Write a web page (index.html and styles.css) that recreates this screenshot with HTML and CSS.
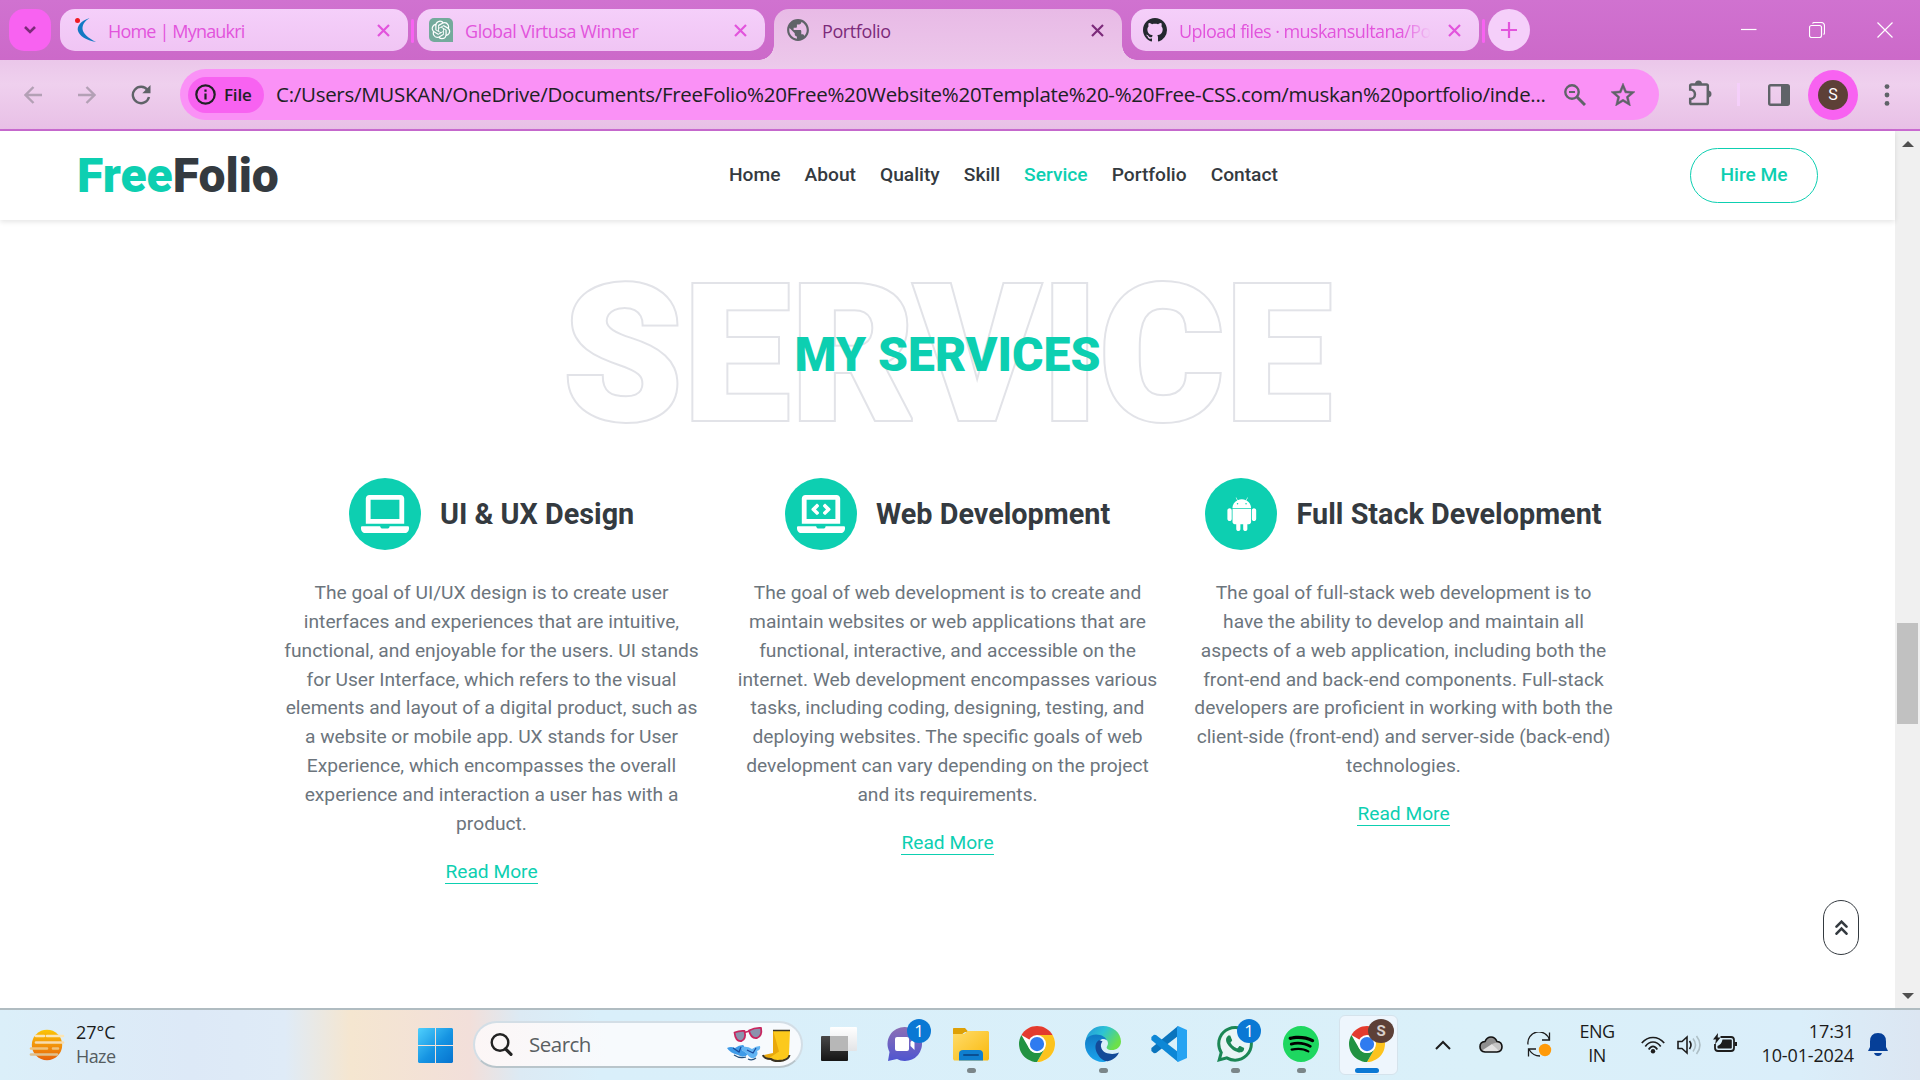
FILE: index.html
```html
<!DOCTYPE html>
<html lang="en">
<head>
<meta charset="utf-8">
<title>Portfolio</title>
<link rel="stylesheet" href="styles.css">
</head>
<body>
<div class="screen">
  <div class="tabstrip">
    <div class="tab-search"><svg width="14" height="10" viewBox="0 0 14 10"><path d="M2 2l5 5 5-5" fill="none" stroke="#7c2a7a" stroke-width="2.6"/></svg></div>
    <div class="tab first">
      <svg class="fav" width="24" height="24" viewBox="0 0 24 24"><path d="M14.500 0C6 3 1.500 8 3 13c1.500 5 8 9 18 11C13 20 7.500 15 7.500 10.500 7.500 6 10 3 14.500 0z" fill="#1379c4"/><circle cx="2.500" cy="2.500" r="2.500" fill="#f01822"/></svg>
      <span class="t t-tab1">Home | Mynaukri</span>
      <svg class="x" width="13" height="13" viewBox="0 0 13 13"><path d="M1 1l11 11M12 1L1 12"/></svg>
    </div>
    <div class="sep"></div>
    <div class="tab">
      <svg class="fav" width="24" height="24" viewBox="0 0 24 24"><path d="M5 0h14a5 5 0 0 1 5 5v19H5a5 5 0 0 1-5-5V5a5 5 0 0 1 5-5z" fill="#74aa9c"/><path transform="translate(2.600 2.600) scale(.78)" fill="#fff" d="M22.2819 9.8211a5.9847 5.9847 0 0 0-.5157-4.9108 6.0462 6.0462 0 0 0-6.5098-2.9A6.0651 6.0651 0 0 0 4.9807 4.1818a5.9847 5.9847 0 0 0-3.9977 2.9 6.0462 6.0462 0 0 0 .7427 7.0966 5.98 5.98 0 0 0 .511 4.9107 6.051 6.051 0 0 0 6.5146 2.9001A5.9847 5.9847 0 0 0 13.2599 24a6.0557 6.0557 0 0 0 5.7718-4.2058 5.9894 5.9894 0 0 0 3.9977-2.9001 6.0557 6.0557 0 0 0-.7475-7.0729zm-9.022 12.6081a4.4755 4.4755 0 0 1-2.8764-1.0408l.1419-.0804 4.7783-2.7582a.7948.7948 0 0 0 .3927-.6813v-6.7369l2.02 1.1686a.071.071 0 0 1 .038.052v5.5826a4.504 4.504 0 0 1-4.4945 4.4944zm-9.6607-4.1254a4.4708 4.4708 0 0 1-.5346-3.0137l.142.0852 4.783 2.7582a.7712.7712 0 0 0 .7806 0l5.8428-3.3685v2.3324a.0804.0804 0 0 1-.0332.0615L9.74 19.9502a4.4992 4.4992 0 0 1-6.1408-1.6464zM2.3408 7.8956a4.485 4.485 0 0 1 2.3655-1.9728V11.6a.7664.7664 0 0 0 .3879.6765l5.8144 3.3543-2.0201 1.1685a.0757.0757 0 0 1-.071 0l-4.8303-2.7865A4.504 4.504 0 0 1 2.3408 7.872zm16.5963 3.8558L13.1038 8.364 15.1192 7.2a.0757.0757 0 0 1 .071 0l4.8303 2.7913a4.4944 4.4944 0 0 1-.6765 8.1042v-5.6772a.79.79 0 0 0-.407-.667zm2.0107-3.0231l-.142-.0852-4.7735-2.7818a.7759.7759 0 0 0-.7854 0L9.409 9.2297V6.8974a.0662.0662 0 0 1 .0284-.0615l4.8303-2.7866a4.4992 4.4992 0 0 1 6.6802 4.66zM8.3065 12.863l-2.02-1.1638a.0804.0804 0 0 1-.038-.0567V6.0742a4.4992 4.4992 0 0 1 7.3757-3.4537l-.142.0805L8.704 5.459a.7948.7948 0 0 0-.3927.6813zm1.0976-2.3654l2.602-1.4998 2.6069 1.4998v2.9994l-2.5974 1.4997-2.6067-1.4997Z"/></svg>
      <span class="t t-tab2">Global Virtusa Winner</span>
      <svg class="x" width="13" height="13" viewBox="0 0 13 13"><path d="M1 1l11 11M12 1L1 12"/></svg>
    </div>
    <div class="tab active">
      <svg class="fav" width="24" height="24" viewBox="1 1 22 22"><path fill="#5f6368" d="M12 2C6.480 2 2 6.480 2 12s4.480 10 10 10 10-4.480 10-10S17.520 2 12 2zm-1 17.930c-3.950-.49-7-3.850-7-7.930 0-.62.08-1.210.21-1.790L9 15v1c0 1.100.9 2 2 2v1.930zm6.900-2.540c-.26-.81-1-1.390-1.900-1.390h-1v-3c0-.55-.45-1-1-1H8v-2h2c.55 0 1-.45 1-1V7h2c1.100 0 2-.9 2-2v-.41c2.930 1.190 5 4.060 5 7.410 0 2.080-.8 3.970-2.100 5.390z"/></svg>
      <span class="t t-tab3">Portfolio</span>
      <svg class="x" width="13" height="13" viewBox="0 0 13 13"><path d="M1 1l11 11M12 1L1 12"/></svg>
    </div>
    <div class="tab last">
      <svg class="fav" width="24" height="24" viewBox="0 0 16 16"><path fill="#24292f" d="M8 0C3.580 0 0 3.580 0 8c0 3.540 2.290 6.530 5.470 7.590.4.070.55-.17.55-.38 0-.19-.01-.82-.01-1.490-2.010.37-2.530-.49-2.690-.94-.09-.23-.48-.94-.82-1.130-.28-.15-.68-.52-.01-.53.63-.01 1.080.58 1.230.82.72 1.210 1.870.87 2.330.66.070-.52.28-.87.51-1.070-1.780-.2-3.640-.89-3.640-3.950 0-.87.31-1.590.82-2.150-.08-.2-.36-1.020.08-2.120 0 0 .67-.21 2.200.82.64-.18 1.320-.27 2-.27s1.360.09 2 .27c1.530-1.040 2.200-.82 2.200-.82.44 1.100.16 1.920.08 2.120.51.56.82 1.270.82 2.150 0 3.070-1.870 3.750-3.650 3.950.29.25.54.73.54 1.480 0 1.070-.01 1.930-.01 2.200 0 .21.15.46.55.38A8.010 8.010 0 0 0 16 8c0-4.420-3.580-8-8-8z"/></svg>
      <span class="t t-tab4 fade">Upload files · muskansultana/Po</span>
      <svg class="x" width="13" height="13" viewBox="0 0 13 13"><path d="M1 1l11 11M12 1L1 12"/></svg>
    </div>
    <div class="sep"></div>
    <div class="newtab"><svg width="16" height="16" viewBox="0 0 16 16"><path d="M8 0v16M0 8h16" stroke="#e254dc" stroke-width="2.200"/></svg></div>
    <div class="winctl">
      <svg width="16" height="16" viewBox="0 0 16 16"><path d="M0 7.500h15.500"/></svg>
      <svg width="16" height="16" viewBox="0 0 16 16"><rect x=".5" y="3.500" width="12" height="12" rx="2"/><path d="M3.500 1.500Q4 .5 5.500.500H12q3.500 0 3.500 3.500v6.500q0 1.500-1 2"/></svg>
      <svg width="16" height="16" viewBox="0 0 16 16"><path d="M.5.500l15 15M15.500.500l-15 15"/></svg>
    </div>
  </div>

  <div class="toolbar">
    <svg class="nav-ico" width="18" height="18" viewBox="0 0 18 18"><path d="M18 9H2M9.500 1L1.500 9l8 8" fill="none" stroke="#b3a0b5" stroke-width="2.400"/></svg>
    <svg class="nav-ico" width="18" height="18" viewBox="0 0 18 18"><path d="M0 9h16M8.500 1l8 8-8 8" fill="none" stroke="#b3a0b5" stroke-width="2.400"/></svg>
    <svg class="nav-ico reload" width="20" height="20" viewBox="0 0 20 20"><path d="M16.600 5A8.200 8.200 0 1 0 18 12" fill="none" stroke="#5f6368" stroke-width="2.400"/><path d="M19.500 0v8.200h-8.200z" fill="#5f6368"/></svg>
    <div class="omnibox">
      <div class="chip">
        <svg width="21" height="21" viewBox="0 0 21 21"><circle cx="10.500" cy="10.500" r="9.200" fill="none" stroke="#202124" stroke-width="2.200"/><path d="M10.500 9.500v6M10.500 5.500v2.200" stroke="#202124" stroke-width="2.200"/></svg>
        <span class="t t-file">File</span>
      </div>
      <span class="t t-url">C:/Users/MUSKAN/OneDrive/Documents/FreeFolio%20Free%20Website%20Template%20-%20Free-CSS.com/muskan%20portfolio/inde...</span>
      <svg class="mag" width="22" height="22" viewBox="0 0 22 22"><g fill="none" stroke="#5f6368"><circle cx="8" cy="8" r="6.700" stroke-width="2.400"/><path d="M12.800 12.800L21 21" stroke-width="3"/><path d="M5 8h6" stroke-width="2"/></g></svg>
      <svg class="star" width="24" height="23" viewBox="2 2 20 19"><path fill="#5f6368" stroke="#5f6368" stroke-width=".4" d="M22 9.240l-7.190-.62L12 2 9.190 8.630 2 9.240l5.460 4.730L5.820 21 12 17.270 18.180 21l-1.630-7.030L22 9.240zM12 15.400l-3.760 2.270 1-4.280-3.320-2.880 4.380-.38L12 6.100l1.710 4.040 4.380.38-3.320 2.880 1 4.280L12 15.400z"/></svg>
    </div>
    <svg class="ext" width="25" height="26" viewBox="0 0 25 26"><path d="M4.500 4.500h15q1.300 0 1.300 1.300v17q0 1.300-1.300 1.300h-15q-1.300 0-1.300-1.300V19a4.600 4.600 0 0 0 0-9.500V5.800q0-1.300 1.300-1.300z" fill="none" stroke="#5f6368" stroke-width="2.500"/><path d="M8 4a3.500 3.500 0 0 1 7 0zM21 10.500a3.500 3.500 0 0 1 0 7z" fill="#5f6368"/></svg>
    <div class="tsep"></div>
    <svg class="panel" width="22" height="22" viewBox="0 0 22 22"><rect x="1.200" y="1.200" width="19.600" height="19.600" rx="1.500" fill="none" stroke="#5f6368" stroke-width="2.400"/><path d="M13 1h8v20h-8z" fill="#5f6368"/></svg>
    <div class="avatar"><div class="face">S</div></div>
    <svg class="dots" width="6" height="22" viewBox="0 0 6 22" fill="#5f6368"><circle cx="3" cy="2.600" r="2.400"/><circle cx="3" cy="11" r="2.400"/><circle cx="3" cy="19.400" r="2.400"/></svg>
  </div>

  <div class="viewport">
    <div class="page">
      <header class="header">
        <div class="logo t"><span>Free</span>Folio</div>
        <nav class="menu">
          <a class="t">Home</a><a class="t">About</a><a class="t">Quality</a><a class="t">Skill</a><a class="t on">Service</a><a class="t">Portfolio</a><a class="t">Contact</a>
        </nav>
        <a class="hire"><span class="t">Hire Me</span></a>
      </header>
      <section class="service">
        <div class="title">
          <div class="ghost"><span class="t">SERVICE</span></div>
          <h1><span class="t">MY SERVICES</span></h1>
        </div>
        <div class="cols">
          <article>
            <div class="head"><div class="circle"><svg width="48" height="38.400" viewBox="0 0 640 512"><path d="M624 416H381.540c-.74 19.810-14.710 32-32.740 32H288c-18.690 0-33.020-17.470-32.770-32H16c-8.800 0-16 7.200-16 16v16c0 35.200 28.800 64 64 64h512c35.200 0 64-28.800 64-64v-16c0-8.800-7.200-16-16-16zM576 48c0-26.400-21.600-48-48-48H112C85.600 0 64 21.600 64 48v336h512V48zm-64 272H128V64h384v256z"/></svg></div><h2 class="t">UI &amp; UX Design</h2></div>
            <p>The goal of UI/UX design is to create user<br>interfaces and experiences that are intuitive,<br>functional, and enjoyable for the users. UI stands<br>for User Interface, which refers to the visual<br>elements and layout of a digital product, such as<br>a website or mobile app. UX stands for User<br>Experience, which encompasses the overall<br>experience and interaction a user has with a<br>product.</p>
            <a class="more t">Read More</a>
          </article>
          <article>
            <div class="head"><div class="circle"><svg width="48" height="38.400" viewBox="0 0 640 512"><path d="M255.030 261.650c6.250 6.250 16.380 6.250 22.630 0l11.310-11.310c6.250-6.250 6.250-16.380 0-22.630L253.250 192l35.710-35.720c6.250-6.250 6.250-16.380 0-22.630l-11.310-11.310c-6.250-6.250-16.380-6.250-22.630 0l-58.340 58.340c-6.250 6.250-6.250 16.380 0 22.630l58.350 58.340zm96.010-11.300l11.310 11.310c6.250 6.250 16.380 6.250 22.630 0l58.340-58.340c6.250-6.250 6.250-16.380 0-22.630l-58.340-58.340c-6.250-6.250-16.380-6.250-22.630 0l-11.310 11.310c-6.250 6.250-6.250 16.380 0 22.630L386.750 192l-35.710 35.720c-6.250 6.250-6.250 16.380 0 22.630zM624 416H381.540c-.74 19.810-14.710 32-32.740 32H288c-18.690 0-33.020-17.470-32.770-32H16c-8.800 0-16 7.200-16 16v16c0 35.200 28.800 64 64 64h512c35.200 0 64-28.800 64-64v-16c0-8.800-7.200-16-16-16zM576 48c0-26.400-21.600-48-48-48H112C85.600 0 64 21.600 64 48v336h512V48zm-64 272H128V64h384v256z"/></svg></div><h2 class="t">Web Development</h2></div>
            <p>The goal of web development is to create and<br>maintain websites or web applications that are<br>functional, interactive, and accessible on the<br>internet. Web development encompasses various<br>tasks, including coding, designing, testing, and<br>deploying websites. The specific goals of web<br>development can vary depending on the project<br>and its requirements.</p>
            <a class="more t">Read More</a>
          </article>
          <article>
            <div class="head"><div class="circle"><svg width="33.600" height="38.400" viewBox="0 0 448 512"><path d="M89.600 204.500v115.800c0 15.400-12.100 27.700-27.500 27.700-15.300 0-30.100-12.400-30.100-27.700V204.500c0-15.100 14.800-27.500 30.100-27.500 15.100 0 27.500 12.400 27.500 27.500zm10.800 157c0 16.400 13.200 29.600 29.600 29.600h19.900l.3 61.100c0 36.900 55.200 36.600 55.200 0v-61.100h37.200v61.100c0 36.700 55.500 36.800 55.500 0v-61.100h20.200c16.200 0 29.400-13.200 29.400-29.600V182.100H100.400v179.400zm248-189.100H99.300c0-42.800 25.600-80 63.600-99.400l-19.100-35.300c-2.800-4.900 4.300-8 6.700-3.800l19.400 35.600c34.900-15.500 75-14.700 108.300 0L297.500 34c2.500-4.300 9.500-1.100 6.700 3.800L285.100 73c37.700 19.400 63.300 56.600 63.300 99.400zm-170.700-55.500c0-5.700-4.600-10.500-10.500-10.500-5.700 0-10.200 4.800-10.200 10.500s4.600 10.500 10.200 10.500c5.900 0 10.500-4.800 10.500-10.500zm113.400 0c0-5.700-4.600-10.500-10.200-10.500-5.900 0-10.500 4.800-10.500 10.500s4.600 10.500 10.500 10.500c5.600 0 10.200-4.800 10.200-10.500zm94.800 60.100c-15.100 0-27.500 12.100-27.500 27.500v115.800c0 15.400 12.400 27.700 27.500 27.700 15.400 0 30.100-12.400 30.100-27.700V204.500c0-15.400-14.800-27.500-30.100-27.500z"/></svg></div><h2 class="t">Full Stack Development</h2></div>
            <p>The goal of full-stack web development is to<br>have the ability to develop and maintain all<br>aspects of a web application, including both the<br>front-end and back-end components. Full-stack<br>developers are proficient in working with both the<br>client-side (front-end) and server-side (back-end)<br>technologies.</p>
            <a class="more t">Read More</a>
          </article>
        </div>
      </section>
      <a class="totop"><svg width="13" height="15" viewBox="0 0 13 15"><path d="M1.500 6.700l5-5 5 5M1.500 13.700l5-5 5 5" fill="none" stroke="#343a40" stroke-width="2.600" stroke-linecap="round"/></svg></a>
    </div>
    <div class="scrollbar">
      <svg width="12" height="6" viewBox="0 0 12 6"><path d="M0 6l6-6 6 6z" fill="#505050"/></svg>
      <div class="thumb"></div>
      <svg width="12" height="6" viewBox="0 0 12 6"><path d="M0 0l6 6 6-6z" fill="#505050"/></svg>
    </div>
  </div>

  <div class="taskbar">
    <div class="weather">
      <svg width="36" height="32" viewBox="0 0 36 32"><defs><linearGradient id="sun" x1="0" y1="0" x2="0" y2="1"><stop offset="0" stop-color="#fbc507"/><stop offset="1" stop-color="#e8620c"/></linearGradient></defs><circle cx="18" cy="16" r="15.200" fill="url(#sun)"/><g stroke-linecap="round" stroke-width="2.600"><path d="M7 7h8M18 7h16" stroke="#fbe6b8"/><path d="M7 13.500h27" stroke="#f7dcae"/><path d="M2 19.500h16M24 19.500h5" stroke="#f0c27a"/><path d="M2 25.500h26" stroke="#dfc08e"/></g></svg>
      <div class="two"><span class="t">27°C</span><span class="t dim">Haze</span></div>
    </div>
    <svg class="win" width="35" height="35" viewBox="0 0 35 35"><defs><linearGradient id="w" x1="0" y1="0" x2="1" y2="1"><stop offset="0" stop-color="#4fd0fd"/><stop offset=".55" stop-color="#1593e2"/><stop offset="1" stop-color="#0673cf"/></linearGradient></defs><path fill="url(#w)" d="M1 0h16v17H0V1zM18 0h16l1 1v16H18zM0 18h17v17H1l-1-1zM18 18h17v16l-1 1H18z"/></svg>
    <div class="search">
      <svg width="23" height="23" viewBox="0 0 23 23"><g fill="none" stroke="#222"><circle cx="10" cy="9.500" r="8.300" stroke-width="2.400"/><path d="M15.500 15.800l5.500 5.500" stroke-width="3.200" stroke-linecap="round"/></g></svg>
      <span class="t">Search</span>
      <svg class="art" width="66" height="36" viewBox="0 0 66 36">
        <g fill="#8a93ad" stroke="#c8265f" stroke-width="1.800" stroke-linejoin="round"><path d="M8.500 6.500q5-2 10-1.500 2 8-3 10-6 1-7-8.500zM23 4.500q6-3 12-2.500 1.500 8-4 10-6 1-8-7.500z"/><path d="M18.500 6.500l5-1.500" /></g>
        <path d="M1 22q4-2 8 0 4-3 8-3 3 2-1 5 4 3 6 4-4 5-10 1Q4 27 1 22z" fill="#3f9be8"/><path d="M14 22q6-3 12 1 4-3 8-3 1 4-3 5 2 4-3 7-4 1-7-4-4-3-7-6z" fill="#62b4f3"/><path d="M7 22l6 4 2-5M21 24l6 3 3-5" stroke="#1a4b9c" stroke-width="1.200" fill="none"/><path d="M8 29q6 4 12 2M22 33q4 2 8-1" stroke="#24507c" stroke-width="1.200" fill="none"/>
        <path d="M38 29l9-2V5q4-2 9 0v22l-8 7q-9 0-10-5z" fill="#e9a80c"/><path d="M47 4h17l-1 24q0 5-7 6.500-11 1.500-12-3l9-6z" fill="#fcc91c"/><path d="M37 29q1 4 8 4 3 3 12 1.500 6-1.500 6.500-5.500" stroke="#3b3424" stroke-width="2" fill="none"/><path d="M47 4.500h17" stroke="#3b3424" stroke-width="1.500"/>
      </svg>
    </div>
    <div class="apps">
      <div class="app"><svg width="36" height="36" viewBox="0 0 36 36"><defs><linearGradient id="tv" x1="0" y1="0" x2="0" y2="1"><stop offset="0" stop-color="#484848"/><stop offset="1" stop-color="#151515"/></linearGradient><linearGradient id="tw" x1="0" y1="0" x2="0" y2="1"><stop offset="0" stop-color="#fff"/><stop offset="1" stop-color="#e3e4e6"/></linearGradient></defs><rect x="0" y="10" width="27" height="25" rx="1" fill="url(#tv)"/><rect x="9" y="1" width="27" height="24" rx="1" fill="url(#tw)"/><path d="M9 10h18v15H9z" fill="#b7b7b7"/></svg></div>
      <div class="app"><svg width="36" height="36" viewBox="0 0 36 36"><defs><linearGradient id="ch" x1="0" y1="0" x2="0" y2="1"><stop offset="0" stop-color="#8c6fb4"/><stop offset="1" stop-color="#4f55d0"/></linearGradient></defs><path d="M18 1a17 17 0 1 1-8 32L1 35l1.500-9A17 17 0 0 1 18 1z" fill="url(#ch)"/><rect x="8" y="11" width="14" height="14" rx="2" fill="#fff"/><path d="M23.500 16l4-4v12l-4-4z" fill="#fff"/></svg><span class="badge">1</span></div>
      <div class="app run"><svg width="36" height="36" viewBox="0 0 36 36"><defs><linearGradient id="fo" x1="0" y1="0" x2="1" y2="1"><stop offset="0" stop-color="#ffdc6b"/><stop offset="1" stop-color="#f9b90c"/></linearGradient></defs><path d="M0 2.500Q0 2 1 2h11l3.500 4H12L8 9H0z" fill="#dea006"/><path d="M0 8h11l3.500-3H35l1 1v27l-1 1.500H1L0 33z" fill="url(#fo)"/><path d="M6 34.500V28q0-4 4-4h16q4 0 4 4v6.500z" fill="#0f7fcf"/><path d="M11 29h14" stroke="#0a4f92" stroke-width="2" stroke-linecap="round"/></svg></div>
      <div class="app"><svg width="36" height="36" viewBox="0 0 48 48"><circle cx="24" cy="24" r="24" fill="#fff"/><path d="M24 24L3.220 12A24 24 0 0 1 44.780 12z" fill="#e33b2e"/><path d="M24 12h20.780A24 24 0 0 1 24 48l10.400-18z" fill="#fcc31e"/><path d="M3.220 12l10.390 18A12 12 0 0 0 34.400 30L24 48A24 24 0 0 1 3.220 12z" fill="#229342"/><circle cx="24" cy="24" r="12" fill="#fff"/><circle cx="24" cy="24" r="9.500" fill="#2f7bf0"/></svg></div>
      <div class="app run"><svg width="36" height="36" viewBox="0 0 36 36"><defs><linearGradient id="e1" x1="0" y1="0" x2="1" y2=".5"><stop offset="0" stop-color="#2390dd"/><stop offset=".5" stop-color="#2cc3d5"/><stop offset="1" stop-color="#6ce04a"/></linearGradient><linearGradient id="e2" x1="0" y1="0" x2="0" y2="1"><stop offset="0" stop-color="#1079c4"/><stop offset="1" stop-color="#1ba4ec"/></linearGradient></defs><path d="M.5 15C2 6 9 0 18 0c10 0 18 7 18 15.500 0 6-5 8.500-9 8.500-5 0-6-2-5-3.500 3-4.500-1-9-6-9-8 0-14 3.500-15.500 3.500z" fill="url(#e1)"/><path d="M0 18C0 12 5 8.500 11 8.500c6 0 10 3 11 6-4-3-9-1-9 5 0 7 6 12 13 11-2.500 3.500-5 5.500-8 5.500C8 36 0 28 0 18z" fill="url(#e2)"/><path d="M13.500 14.500C10 17 9.500 22 12 27c3 6 8 9 11.500 8 5-1 9-5 10.500-8.500-5 2.500-15 2-17.500-4-1.200-3-.5-5.500 1-7-1.500-.5-2.500-1.500-4-1z" fill="#134a98"/></svg></div>
      <div class="app"><svg width="36" height="36" viewBox="0 0 36 36"><path d="M27 0v10L5 27l-2 .3-2.600-2.400V22z" fill="#0a74bd"/><path d="M.4 11L3 8.700 5 9l22 17v10L.4 14z" fill="#0d87d6"/><path d="M27 0l9 4v28l-9 4-1-2V2z" fill="#26a3f2"/></svg></div>
      <div class="app run"><svg width="36" height="36" viewBox="0 0 24 24"><path d="M12 1.200a10.800 10.800 0 0 0-9.200 16.500L1.500 22.500l5-1.300A10.800 10.800 0 1 0 12 1.200z" fill="#e9f5f6"/><path fill="#1b8755" d="M17.472 14.382c-.297-.149-1.758-.867-2.030-.967-.273-.099-.471-.148-.67.15-.197.297-.767.966-.94 1.164-.173.199-.347.223-.644.075-.297-.15-1.255-.463-2.390-1.475-.883-.788-1.480-1.761-1.653-2.059-.173-.297-.018-.458.13-.606.134-.133.298-.347.446-.52.149-.174.198-.298.298-.497.099-.198.05-.371-.025-.52-.075-.149-.669-1.612-.916-2.207-.242-.579-.487-.5-.669-.51-.173-.008-.371-.01-.57-.01-.198 0-.52.074-.792.372-.272.297-1.040 1.016-1.040 2.479 0 1.462 1.065 2.875 1.213 3.074.149.198 2.096 3.200 5.077 4.487.709.306 1.262.489 1.694.625.712.227 1.360.195 1.871.118.571-.085 1.758-.719 2.006-1.413.248-.694.248-1.289.173-1.413-.074-.124-.272-.198-.57-.347m-5.421 7.403h-.004a9.870 9.870 0 01-5.031-1.378l-.361-.214-3.741.982.998-3.648-.235-.374a9.860 9.860 0 01-1.510-5.260c.001-5.450 4.436-9.884 9.888-9.884 2.640 0 5.122 1.030 6.988 2.898a9.825 9.825 0 012.893 6.994c-.003 5.450-4.437 9.884-9.885 9.884m8.413-18.297A11.815 11.815 0 0012.050 0C5.495 0 .16 5.335.157 11.892c0 2.096.547 4.142 1.588 5.945L.057 24l6.305-1.654a11.882 11.882 0 005.683 1.448h.005c6.554 0 11.890-5.335 11.893-11.893a11.821 11.821 0 00-3.480-8.413z"/></svg><span class="badge">1</span></div>
      <div class="app run"><svg width="36" height="36" viewBox="0 0 24 24"><circle cx="12" cy="12" r="11" fill="#000"/><path fill="#1ed760" d="M12 0C5.400 0 0 5.400 0 12s5.400 12 12 12 12-5.400 12-12S18.660 0 12 0zm5.521 17.340c-.24.359-.66.48-1.021.24-2.820-1.740-6.360-2.101-10.561-1.141-.418.122-.779-.179-.899-.539-.12-.421.18-.78.54-.9 4.560-1.021 8.520-.6 11.640 1.320.42.18.479.659.301 1.020zm1.440-3.300c-.301.42-.841.6-1.262.3-3.239-1.980-8.159-2.580-11.939-1.380-.479.12-1.020-.12-1.140-.6-.12-.48.12-1.021.6-1.141C9.600 9.900 15 10.561 18.720 12.840c.361.181.54.78.241 1.200zm.12-3.360C15.240 8.400 8.820 8.160 5.160 9.301c-.6.179-1.200-.181-1.380-.721-.18-.601.18-1.200.72-1.381 4.260-1.260 11.280-1.020 15.721 1.621.539.3.719 1.020.419 1.560-.299.421-1.020.599-1.559.3z"/></svg></div>
      <div class="app current"><svg width="36" height="36" viewBox="0 0 48 48"><circle cx="24" cy="24" r="24" fill="#fff"/><path d="M24 24L3.220 12A24 24 0 0 1 44.780 12z" fill="#e33b2e"/><path d="M24 12h20.780A24 24 0 0 1 24 48l10.400-18z" fill="#fcc31e"/><path d="M3.220 12l10.390 18A12 12 0 0 0 34.400 30L24 48A24 24 0 0 1 3.220 12z" fill="#229342"/><circle cx="24" cy="24" r="12" fill="#fff"/><circle cx="24" cy="24" r="9.500" fill="#2f7bf0"/></svg><span class="badge user">S</span></div>
    </div>
    <div class="tray">
      <svg class="chev" width="16" height="10" viewBox="0 0 16 10"><path d="M1 9l7-7 7 7" fill="none" stroke="#1d1d1d" stroke-width="2"/></svg>
      <svg class="cloud" width="24" height="17" viewBox="0 0 24 17"><path d="M6 5.500Q8 1 12 1t6 4.500q5 .5 5 5.300T18 16H6q-5-.5-5-5.300T6 5.500z" fill="#8f8f8f"/><path d="M3 14.500L13 8l8 6.500q-1 1.500-3 1.500H6z" fill="#e2e2e2"/><path d="M13 8l6-2q4 1 4 5 0 3-3 4z" fill="#c4c4c4"/><path d="M6 5.500Q8 1 12 1t6 4.500q5 .5 5 5.300T18 16H6q-5-.5-5-5.300T6 5.500z" fill="none" stroke="#111" stroke-width="1.600"/></svg>
      <svg class="sync" width="25" height="25" viewBox="0 0 25 25"><g fill="none" stroke="#1d1d1d" stroke-width="1.300"><path d="M1 12.500A11 11 0 0 1 22.500 8M22.500.500V8H15M1.500 24.500V17H9M2 17.500q4 6.500 11 6.500"/></g><circle cx="18" cy="18" r="6.200" fill="#ff9a09"/></svg>
      <div class="lang"><span class="t">ENG</span><span class="t">IN</span></div>
      <svg class="wifi" width="24" height="18" viewBox="0 0 24 18"><g fill="none" stroke="#1d1d1d" stroke-width="1.700"><path d="M.8 7Q5.500 1.500 12 1.500T23.200 7M4.300 10.500Q7.500 6 12 6t7.700 4.500M7.700 13.500Q9.500 10.300 12 10.300t4.300 3.200"/></g><circle cx="12" cy="15.300" r="2.200" fill="#1d1d1d"/></svg>
      <svg class="vol" width="24" height="20" viewBox="0 0 24 20"><g fill="none" stroke-width="1.600"><path d="M1 6.500h4L10 2v16l-5-4.500H1z" stroke="#1d1d1d"/><path d="M12.500 6q3 4 0 8" stroke="#1d1d1d"/><path d="M16 3.500q5 6.500 0 13M19.500 1q7 9 0 18" stroke="#aebfc6"/></g></svg>
      <svg class="bat" width="24" height="20" viewBox="0 0 24 20"><path d="M7.500 4H18q3 0 3 3v8q0 3-3 3H5q-3 0-3-3v-4" fill="none" stroke="#1d1d1d" stroke-width="1.800"/><path d="M9.500 6.500H18q.8 0 .8.800v7.400q0 .8-.8.800H5.300q-.8 0-.8-.8V13q4-1.500 5-6.500zM21.500 9h2.500v4h-2.500z" fill="#1d1d1d"/><path d="M5 0L0 6.500h3L2 11.500 7.500 4.500H4.700z" fill="#1d1d1d"/></svg>
      <div class="clock"><span class="t">17:31</span><span class="t">10-01-2024</span></div>
      <svg class="bell" width="20" height="24" viewBox="0 0 20 24"><path d="M10 0q8 0 8 8.500V14l2 4H0l2-4V8.500Q2 0 10 0zM6 20h8q-1 3-4 3t-4-3z" fill="#063f98"/></svg>
    </div>
  </div>
</div>
</body>
</html>
```
FILE: styles.css
```css
* { box-sizing: border-box; }
body { margin: 0; font-family: "Open Sans", "Noto Sans", sans-serif; overflow: hidden; }
svg { display: block; flex: none; }
.screen { width: 1920px; height: 1080px; display: flex; flex-direction: column; }

.tabstrip { height: 60px; padding: 9px 0 0 9px; display: flex; align-items: flex-start; background: linear-gradient(#d072d0, #cc69c9); }
.tab-search { width: 42px; height: 42px; margin-right: 9px; border-radius: 15px; background: #f862f1; display: flex; align-items: center; justify-content: center; }
.tab { width: 348px; height: 42px; border-radius: 15px; display: flex; align-items: center; padding: 0 18px 0 12px; background: linear-gradient(#f5cffa, #f0c5f4); color: #e254dc; font-size: 18px; white-space: nowrap; }
.tab .fav { margin-right: 12px; }
.tab.first { padding-left: 15px; }
.tab.first .fav { margin-right: 9px; }
.tab .t { padding-top: 2px; }
.tab .x { margin-left: auto; stroke: currentColor; stroke-width: 2.2; fill: none; }
.t-tab1 { letter-spacing: -.82px; }
.t-tab2 { letter-spacing: -.45px; }
.t-tab3 { letter-spacing: -.4px; }
.t-tab4 { letter-spacing: -.58px; }
.tab.active { position: relative; height: 51px; margin-left: 9px; padding-bottom: 9px; border-radius: 15px 15px 0 0; background: linear-gradient(#e8bae6, #ecc6ea); color: #7c2a7a; }
.tab.active::before, .tab.active::after { content: ""; position: absolute; bottom: 0; width: 15px; height: 15px; }
.tab.active::before { left: -15px; background: radial-gradient(circle at 0 0, transparent 14.5px, #ecc6ea 15px); }
.tab.active::after { right: -15px; background: radial-gradient(circle at 100% 0, transparent 14.5px, #ecc6ea 15px); }
.tab.last { margin-left: 9px; }
.fade { -webkit-mask-image: linear-gradient(90deg, #000 88%, transparent); mask-image: linear-gradient(90deg, #000 88%, transparent); }
.sep { width: 3px; height: 24px; margin: 10px 3px 0; border-radius: 2px; background: #f862f1; }
.newtab { width: 42px; height: 42px; border-radius: 50%; background: #f5cffa; display: flex; align-items: center; justify-content: center; }
.winctl { margin-left: auto; margin-right: 27px; margin-top: 13px; display: flex; gap: 52px; }
.winctl svg { fill: none; stroke: #fff; stroke-width: 1.2; }

.toolbar { height: 71px; border-bottom: 2px solid #c96ad0; padding: 0 30px 0 24px; display: flex; align-items: center; background: linear-gradient(#ebc7ea, #efd0ee 35%, #e8c0e6); }
.nav-ico { margin-right: 36px; }
.nav-ico.reload { margin-left: -1px; margin-right: 29px; }
.omnibox { width: 1479px; height: 51px; border-radius: 26px; background: #fa91f6; display: flex; align-items: center; padding: 0 24px 0 8px; color: #202124; }
.chip { flex: none; width: 76px; height: 36px; margin-right: 12px; border-radius: 18px; background: #f862f1; display: flex; align-items: center; gap: 8px; padding-left: 7px; font-size: 17px; font-weight: 600; letter-spacing: -.2px; }
.t-url { font-size: 20.5px; white-space: nowrap; letter-spacing: -.28px; padding-bottom: 2px; }
.mag { margin-left: auto; margin-right: 25px; }
.ext { margin-left: 28px; margin-bottom: 3px; }
.tsep { width: 3px; height: 23px; margin-left: 25px; background: #f5cffa; }
.panel { margin-left: 28px; }
.avatar { width: 50px; height: 50px; margin-left: 18px; border-radius: 50%; background: #f862f1; display: flex; align-items: center; justify-content: center; }
.face { width: 30px; height: 30px; border-radius: 50%; background: #5d4037; color: #fff; font: 16px/30px Roboto, sans-serif; text-align: center; }
.dots { margin-left: auto; }

.viewport { height: 877px; display: flex; background: #fff; font-family: Roboto, sans-serif; }
.page { width: 1895px; position: relative; color: #6c757d; font-size: 19.2px; line-height: 28.8px; }
.header { height: 89px; display: grid; grid-template-columns: 652px auto 1fr; align-items: center; padding: 0 77px; box-shadow: 0 2px 5px rgba(0,0,0,.1); }
.logo { justify-self: start; font-size: 48px; line-height: 58px; font-weight: 900; color: #343a40; }
.logo span, .menu .on { color: #0dcfb1; }
.menu { display: flex; gap: 24px; font-weight: 500; color: #343a40; }
.hire { justify-self: end; width: 128px; height: 55px; border: 1px solid #0dcfb1; border-radius: 28px; display: flex; align-items: center; justify-content: center; font-weight: 500; color: #0dcfb1; }
.service { width: 1368px; margin: 0 auto; }
.title { height: 258px; padding-top: 11px; display: grid; align-items: center; justify-items: center; }
.title > * { grid-area: 1 / 1; margin: 0; }
.ghost { font-size: 192px; line-height: 230px; font-weight: 900; color: #fff; -webkit-text-stroke: 4px #e2e3e8; paint-order: stroke fill; }
.title h1 { position: relative; font-size: 48px; line-height: 58px; font-weight: 900; color: #0dcfb1; }
.cols { display: grid; grid-template-columns: repeat(3, 1fr); text-align: center; }
article { padding: 0 10px; white-space: nowrap; }
.head { display: flex; align-items: center; justify-content: center; margin-bottom: 29.2px; }
.circle { width: 72px; height: 72px; border-radius: 50%; background: #0dcfb1; display: flex; align-items: center; justify-content: center; fill: #fff; }
h2 { margin: 0 0 0 19.2px; font-size: 28.8px; line-height: 34px; font-weight: 700; color: #343a40; }
article p { margin: 0 0 19.2px; }
.more { color: #0dcfb1; border-bottom: 1px solid #0dcfb1; }
.totop { position: absolute; left: 1823px; top: 769px; width: 36px; height: 55px; border: 1px solid #343a40; border-radius: 18px; background: #fff; display: flex; align-items: center; justify-content: center; }
.scrollbar { width: 25px; background: #f0f0f0; display: flex; flex-direction: column; align-items: center; padding: 10px 0 9px; }
.thumb { width: 21px; height: 101px; margin: 476px 0 auto; background: #c1c1c1; }

.taskbar { height: 72px; border-top: 2px solid #b0bcc1; display: flex; align-items: center; color: #1b1b1b; font-size: 18px; line-height: 24px; background: linear-gradient(90deg, #dbeff9 0, #dde9f7 190px, #dfebf7 285px, #f5e6d0 350px, #f2dfda 470px, #dceaf4 520px, #d9effa 600px, #daf0f9 1500px, #daeefa 1800px, #dce6f2 1920px); }
.weather { display: flex; align-items: center; gap: 11px; width: 389px; padding-left: 29px; }
.two, .lang, .clock { display: flex; flex-direction: column; align-items: flex-start; padding-bottom: 3px; }
.dim { color: #555c60; letter-spacing: -.6px; }
.win { margin-left: 29px; margin-right: 20px; }
.search { width: 330px; height: 47px; border: 2px solid #d3dee6; border-bottom-color: #b9c5cb; border-radius: 24px; background: linear-gradient(90deg, #fcf6f6, #f7fafd 40%); display: flex; align-items: center; padding: 0 9px 0 15px; color: #5a5f62; font-size: 20.5px; margin-bottom: 2px; }
.search .t { margin-left: 16px; letter-spacing: -.5px; }
.search .art { margin-left: auto; }
.apps { display: flex; margin-left: 3px; }
.app { position: relative; width: 66px; height: 70px; display: flex; align-items: center; justify-content: center; padding-bottom: 2px; }
.app.run::after, .app.current::after { content: ""; position: absolute; bottom: 7px; left: 29px; width: 9px; height: 5px; border-radius: 3px; background: #7b8689; }
.app.current::after { left: 21px; width: 24px; background: #0a78d4; }
.app.current::before { content: ""; position: absolute; left: 5px; top: 5px; width: 57px; height: 58px; border-radius: 6px; border: 1px solid #d5e3ec; background: #eef6fd; }
.app svg { position: relative; }
.badge { position: absolute; left: 35px; top: 9px; width: 24px; height: 24px; border-radius: 50%; background: #0a78d4; color: #fff; font-size: 17px; line-height: 24px; text-align: center; }
.badge.user { left: 34px; width: 26px; background: #5d4037; color: #d8cfcc; font: bold 15px/25px Roboto, sans-serif; }
.tray { flex: 1; display: flex; align-items: center; padding-right: 32px; padding-bottom: 1px; }
.chev { margin-left: 35px; }
.cloud { margin-left: 28px; }
.sync { margin-left: 24px; }
.lang { align-items: center; width: 34px; margin-left: 28px; letter-spacing: -.6px; }
.wifi { margin-left: 27px; }
.vol { margin-left: 12px; }
.bat { margin-left: 12px; margin-bottom: 3px; }
.clock { align-items: flex-end; margin-left: auto; margin-right: 14px; letter-spacing: -.15px; }
```
